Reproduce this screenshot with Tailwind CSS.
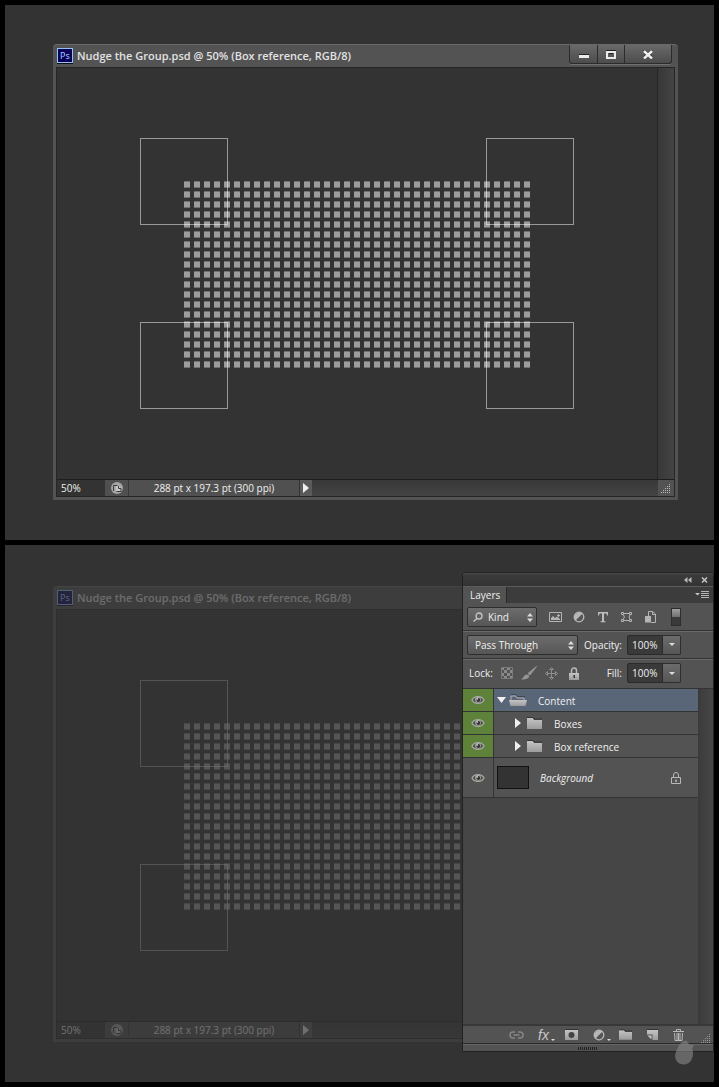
<!DOCTYPE html>
<html lang="en">
<head>
    <meta charset="UTF-8">
    <meta name="viewport" content="width=device-width, initial-scale=1.0">
    <title>Nudge the Group</title>
    <script src="https://cdn.jsdelivr.net/npm/@tailwindcss/browser@4"></script>
</head>
<body class="bg-black p-[5px] flex flex-col gap-[5px] font-['Open_Sans','Noto_Sans',sans-serif] text-[10px] leading-4 text-[#f0f0f0]">

    <!-- shared icons -->
    <svg class="absolute size-0" aria-hidden="true">
        <defs>
            <pattern id="dots" width="10" height="10" patternUnits="userSpaceOnUse" x="44" y="43">
                <rect width="6" height="7" fill="#fff" fill-opacity=".3"/>
                <rect y="1" width="6" height="5" fill="#fff" fill-opacity=".3"/>
            </pattern>
            <pattern id="checker" width="6" height="6" patternUnits="userSpaceOnUse">
                <path d="M0 0h3v3H0zM3 3h3v3H3z" fill="#8a8a8a"/>
            </pattern>
            <linearGradient id="metal" x1="0" y1="0" x2="0" y2="1">
                <stop offset="0" stop-color="#c4c4c4"/>
                <stop offset="1" stop-color="#9c9c9c"/>
            </linearGradient>
            <symbol id="eye" viewBox="0 0 14 10">
                <path d="M1 5C3 .4 11 .4 13 5 11 9.400 3 9.400 1 5z" fill="#4d5548" stroke="#a8aca4" stroke-width="1.300"/>
                <circle cx="7" cy="4.800" r="2.800" fill="#b4b4b4"/>
                <circle cx="7.300" cy="5" r="2" fill="#333"/>
                <circle cx="6.300" cy="4" r=".8" fill="#eee"/>
            </symbol>
            <symbol id="folder" viewBox="0 0 15 12">
                <path d="M0 1h6l1 2h8v9H0z" fill="url(#metal)"/>
                <path d="M0 .5h6l1 1.500h8" fill="none" stroke="#333"/>
            </symbol>
            <symbol id="updown" viewBox="0 0 6 9">
                <path d="M3 0l3 3.500H0zM3 9l3-3.500H0z" fill="#dcdcdc"/>
            </symbol>
            <symbol id="half" viewBox="0 0 12 12">
                <circle cx="6" cy="6" r="4.800" fill="#555" stroke="#b8b8b8" stroke-width="1.300"/>
                <path d="M9.500 2.500A5 5 0 0 0 2.500 9.500z" fill="#b8b8b8"/>
            </symbol>
        </defs>
    </svg>

    <template id="documentWindow">
        <div class="bg-[#535353] rounded-t-[4px] border-t border-[#696969] px-[3px] pb-[3px]">
            <header class="flex h-[22px] items-start">
                <svg class="mt-[3px] ml-px size-4 shrink-0" viewBox="0 0 16 16">
                    <rect x=".5" y=".5" width="15" height="14" fill="#0a0059" stroke="#8fc3f7"/>
                    <path d="M0 15.500h16" stroke="#111"/>
                    <text x="3" y="11" font-size="9" font-family="Noto Sans" fill="#9ccbf5">Ps</text>
                </svg>
                <h2 class="ml-1 mt-[3px] min-w-0 flex-1 truncate text-[11px] font-semibold text-[#e2e2e2]">Nudge the Group.psd @ 50% (Box reference, RGB/8)</h2>
                <div class="mr-[3px] flex h-[19px] rounded-b-[3px] border border-t-0 border-[#2b2b2b] bg-linear-to-b from-[#6a6a6a] to-[#4c4c4c] shadow-[0_1px_0_#707070]">
                    <button aria-label="Minimize" class="flex w-7 items-center justify-center border-r border-[#2b2b2b]">
                        <svg width="10" height="12"><path d="M0 6.500h10" stroke="#222"/><path d="M0 8.500h10" stroke="#eaeaea" stroke-width="3"/></svg>
                    </button>
                    <button aria-label="Maximize" class="flex w-[27px] items-center justify-center border-r border-[#2b2b2b]">
                        <svg width="10" height="9"><path d="M0 .5h10M3 3.500h4" stroke="#222"/><path d="M1 2h8v6H1z" fill="none" stroke="#eaeaea" stroke-width="2"/></svg>
                    </button>
                    <button aria-label="Close" class="flex w-[46px] items-center justify-center">
                        <svg width="10" height="9"><path d="M1 0l8 7M9 0L1 7" stroke="#222" stroke-width="2"/><path d="M1 1l8 7.500M9 1L1 8.500" stroke="#eee" stroke-width="2.400"/></svg>
                    </button>
                </div>
            </header>
            <div class="border border-[#262626]">
                <div class="flex">
                    <div class="flex h-[411px] flex-1 items-center justify-center bg-[#333]">
                        <svg width="434" height="271" fill="none" stroke="#fff" stroke-opacity=".5">
                            <rect x="44" y="43" width="346" height="187" fill="url(#dots)" stroke="none"/>
                            <rect x=".5" y=".5" width="87" height="86"/>
                            <rect x="346.500" y=".5" width="87" height="86"/>
                            <rect x=".5" y="184.500" width="87" height="86"/>
                            <rect x="346.500" y="184.500" width="87" height="86"/>
                        </svg>
                    </div>
                    <div class="w-[17px] border-l border-[#262626] bg-linear-to-r from-[#383838] to-[#444]"></div>
                </div>
                <footer class="flex h-[17px] border-t border-[#1e1e1e] bg-linear-to-b from-[#383838] to-[#444]">
                    <input type="text" aria-label="Zoom" value="50%" class="w-12 bg-[#333] pl-1">
                    <div class="flex w-6 items-center justify-center border-r border-[#3a3a3a] bg-[#505050]">
                        <svg width="12" height="12"><circle cx="6" cy="6" r="6" fill="#a5a5a5"/><path d="M5 9V3.500h2.500L10 6v3z" fill="#c8c8c8"/><path d="M2.500 9V3.500h4M5.500 9.500h4.500V6.500H7.500V4" fill="none" stroke="#3c3c3c"/></svg>
                    </div>
                    <p class="w-[171px] border-r border-[#333] bg-[#505050] text-center">288 pt x 197.3 pt (300 ppi)</p>
                    <button aria-label="Status menu" class="flex w-3 items-center justify-center bg-[#5a5a5a]">
                        <svg width="6" height="10"><path d="M0 0l6 5-6 5z" fill="#f0f0f0"/></svg>
                    </button>
                    <div class="ml-auto flex size-4 items-center justify-center bg-[#535353]">
                        <svg width="10" height="10" stroke="#bbb" stroke-dasharray="1 1"><path d="M0 9.500h10M2 7.500h8M4 5.500h6M6 3.500h4M8 1.500h2"/></svg>
                    </div>
                </footer>
            </div>
        </div>
    </template>

    <section class="bg-[#333] pt-[39px] pr-9 pb-10 pl-12">
        <div data-window></div>
    </section>

    <section class="relative bg-[#333] pt-[41px] pr-9 pb-10 pl-12">
        <div data-window class="opacity-32"></div>

        <aside class="absolute top-[27px] right-0 flex h-[480px] w-[252px] flex-col rounded-t-[3px] border border-[#222] bg-[#535353]">
            <div class="flex h-[13px] items-center justify-end gap-[9px] rounded-t-[3px] border-t border-[#4a4a4a] bg-linear-to-b from-[#3c3c3c] to-[#333] pr-[5px]">
                <button aria-label="Collapse panel"><svg width="8" height="6"><path d="M3.500 0v6L0 3zM7.500 0v6L4 3z" fill="#b8b8b8"/></svg></button>
                <button aria-label="Close panel"><svg width="7" height="6"><path d="M1 .5l5 5M6 .5l-5 5" stroke="#c4c4c4" stroke-width="1.500"/></svg></button>
            </div>
            <div class="flex h-[17px] border-t border-[#5c5c5c] bg-[#3c3c3c]">
                <h2 class="w-11 border-r border-[#2a2a2a] bg-[#535353] pl-[7px]">Layers</h2>
                <button aria-label="Panel menu" class="mr-1 ml-auto flex items-center">
                    <svg width="14" height="8"><path d="M0 2h5L2.500 4.500z" fill="#c4c4c4"/><path d="M6 .5h8M6 2.500h8M6 4.500h8M6 6.500h8" stroke="#b4b4b4"/></svg>
                </button>
            </div>

            <div class="flex h-7 items-center border-b border-[#333] pl-1">
                <div class="relative">
                    <svg class="pointer-events-none absolute top-[5px] left-[6px]" width="10" height="10" fill="none" stroke="#c8c8c8" stroke-width="1.300"><circle cx="6" cy="4" r="3"/><path d="M4 6.500L.5 9.500"/></svg>
                    <select aria-label="Filter type" class="h-5 w-[70px] appearance-none rounded-[2px] border border-[#2e2e2e] bg-linear-to-b from-[#6c6c6c] to-[#565656] pl-5">
                        <option>Kind</option>
                    </select>
                    <svg class="pointer-events-none absolute top-[6px] right-[4px] h-[9px] w-[6px]"><use href="#updown"/></svg>
                </div>
                <div class="ml-3 flex items-center gap-[10px]">
                    <button aria-label="Pixel layers"><svg width="14" height="12"><path d="M.5 1.500h12v9H.5z" fill="none" stroke="#b4b4b4"/><path d="M2 9V7l2-2 2 2 2-1.500L11 8v1z" fill="#b4b4b4"/><path d="M9.500 3v3M8 4.500h3" stroke="#b4b4b4"/></svg></button>
                    <button aria-label="Adjustment layers" class="w-[13px]"><svg class="size-3"><use href="#half"/></svg></button>
                    <button aria-label="Type layers"><svg width="14" height="12"><path d="M2 1h10v3.500h-1L10.500 2.500H8V10l1.500.5v.8h-5v-.8L6 10V2.500H3.500L3 4.500H2z" fill="#bcbcbc"/></svg></button>
                    <button aria-label="Shape layers"><svg width="14" height="12" fill="none" stroke="#b4b4b4"><path d="M4 2.500h5M4 9.500h5M3.500 4c1 1.500 1 2.500 0 4M10 4c-1 1.500-1 2.500 0 4M1.500 1.500h2v2h-2zM9.500 1.500h2v2h-2zM1.500 8.500h2v2h-2zM9.500 8.500h2v2h-2z"/></svg></button>
                    <button aria-label="Smart objects"><svg width="14" height="12"><path d="M4.500 5V.5h4L11.500 3v8.500H7" fill="none" stroke="#b4b4b4"/><path d="M8.500.5V3.500h3" fill="none" stroke="#b4b4b4"/><path d="M1 5h6v6.500H1z" fill="#b4b4b4"/></svg></button>
                </div>
                <button aria-label="Toggle filtering" class="ml-[13px] h-[18px] w-[10px] border border-[#2e2e2e] bg-[#3a3a3a]"><span class="mb-2 block h-2 bg-linear-to-b from-[#a0a0a0] to-[#707070]"></span></button>
            </div>

            <div class="flex h-7 items-center border-t border-b border-t-[#6a6a6a] border-b-[#333] pr-8 pb-px pl-1">
                <div class="relative">
                    <select aria-label="Blend mode" class="h-5 w-[111px] appearance-none rounded-[2px] border border-[#2e2e2e] bg-linear-to-b from-[#6c6c6c] to-[#565656] pl-[7px]">
                        <option>Pass Through</option>
                    </select>
                    <svg class="pointer-events-none absolute top-[6px] right-[4px] h-[9px] w-[6px]"><use href="#updown"/></svg>
                </div>
                <label for="opacity" class="mr-[5px] ml-auto">Opacity:</label>
                <input id="opacity" type="text" value="100%" class="h-5 w-9 rounded-l-[2px] border border-[#2a2a2a] bg-[#3a3a3a] pl-1">
                <button aria-label="Opacity slider" class="flex h-5 w-[18px] items-center justify-center rounded-r-[2px] border border-l-0 border-[#2e2e2e] bg-linear-to-b from-[#6c6c6c] to-[#565656]">
                    <svg width="6" height="3"><path d="M0 0h6L3 3z" fill="#dcdcdc"/></svg>
                </button>
            </div>

            <div class="flex h-[29px] items-center border-t border-[#6a6a6a] pr-8 pb-[2px] pl-[6px]">
                <span>Lock:</span>
                <div class="ml-2 flex items-center gap-[8px]">
                    <button aria-label="Lock transparent pixels"><svg width="12" height="12"><path d="M.5.5h11v11H.5z" fill="url(#checker)" stroke="#7a7a7a"/></svg></button>
                    <button aria-label="Lock image pixels"><svg width="16" height="14"><path d="M15.500.5L9 9 7 7.500z" fill="#949494" stroke="#949494"/><path d="M6 8.500c1.500 0 2.500 1 2 2.500-1 2-4.500 2.500-8 2.500 2.500-1 2.500-4.500 6-5z" fill="#949494"/></svg></button>
                    <button aria-label="Lock position"><svg width="13" height="13" stroke="#8c8c8c"><path d="M6.500 2v9M2 6.500h9"/><path d="M6.500.5l2 2h-4zM6.500 12.500l2-2h-4zM.5 6.500l2-2v4zM12.500 6.500l-2-2v4z" fill="#535353"/></svg></button>
                    <button aria-label="Lock all" class="ml-[3px]"><svg width="10" height="13"><path d="M2.500 6V3.500a2.500 2.500 0 0 1 5 0V6" fill="none" stroke="#b8b8b8" stroke-width="1.500"/><path d="M0 6h10v7H0z" fill="url(#metal)"/><path d="M4.500 8h1.500v3H4.500z" fill="#333"/></svg></button>
                </div>
                <label for="fill" class="mr-[5px] ml-auto">Fill:</label>
                <input id="fill" type="text" value="100%" class="h-5 w-9 rounded-l-[2px] border border-[#2a2a2a] bg-[#3a3a3a] pl-1">
                <button aria-label="Fill slider" class="flex h-5 w-[18px] items-center justify-center rounded-r-[2px] border border-l-0 border-[#2e2e2e] bg-linear-to-b from-[#6c6c6c] to-[#565656]">
                    <svg width="6" height="3"><path d="M0 0h6L3 3z" fill="#dcdcdc"/></svg>
                </button>
            </div>

            <div class="flex flex-1 border-t border-[#333] bg-[#464646]">
                <ul class="flex-1">
                    <li class="flex h-[23px] border-b border-[#333] bg-[#596678]">
                        <button aria-label="Toggle Content" class="flex w-[31px] items-center justify-center border-r border-[#333] bg-[#5f823a]"><svg class="h-[10px] w-[14px]"><use href="#eye"/></svg></button>
                        <div class="flex flex-1 items-center pl-[3px]">
                            <svg width="9" height="6"><path d="M0 0h9L4.500 6z" fill="#f0f0f0"/></svg>
                            <svg class="ml-[3px]" width="18" height="12"><path d="M2 6V2h5l1 2h7v3" fill="#596678" stroke="#b4b4b4"/><path d="M2 .5h5l1 2h8" fill="none" stroke="#3c4656"/><path d="M0 6h18l-1.500 6h-15z" fill="url(#metal)"/></svg>
                            <span class="mt-[2px] ml-[11px]">Content</span>
                        </div>
                    </li>
                    <li class="flex h-[23px] border-b border-[#333] bg-[#535353]">
                        <button aria-label="Toggle Boxes" class="flex w-[31px] items-center justify-center border-r border-[#333] bg-[#5f823a]"><svg class="h-[10px] w-[14px]"><use href="#eye"/></svg></button>
                        <div class="flex flex-1 items-center pl-[21px]">
                            <svg width="6" height="10"><path d="M0 0l6 5-6 5z" fill="#f0f0f0"/></svg>
                            <svg class="ml-[6px] h-3 w-[15px]"><use href="#folder"/></svg>
                            <span class="mt-[2px] ml-3">Boxes</span>
                        </div>
                    </li>
                    <li class="flex h-[23px] border-b border-[#333] bg-[#535353]">
                        <button aria-label="Toggle Box reference" class="flex w-[31px] items-center justify-center border-r border-[#333] bg-[#5f823a]"><svg class="h-[10px] w-[14px]"><use href="#eye"/></svg></button>
                        <div class="flex flex-1 items-center pl-[21px]">
                            <svg width="6" height="10"><path d="M0 0l6 5-6 5z" fill="#f0f0f0"/></svg>
                            <svg class="ml-[6px] h-3 w-[15px]"><use href="#folder"/></svg>
                            <span class="mt-[2px] ml-3">Box reference</span>
                        </div>
                    </li>
                    <li class="flex h-10 border-b border-[#333] bg-[#535353]">
                        <button aria-label="Toggle Background" class="flex w-[31px] items-center justify-center border-r border-[#333]"><svg class="h-[10px] w-[14px]"><use href="#eye"/></svg></button>
                        <div class="flex flex-1 items-center pr-[17px] pl-[3px]">
                            <span class="h-[23px] w-8 border border-[#111] bg-[#333]"></span>
                            <span class="ml-[11px] italic">Background</span>
                            <svg class="ml-auto" width="10" height="12"><path d="M2.500 5.500V3a2.500 2.500 0 0 1 5 0v2.500M.5 5.500h9v6h-9z" fill="none" stroke="#b8b8b8"/><path d="M5 7.500v2.500" stroke="#b8b8b8" stroke-width="1.500"/></svg>
                        </div>
                    </li>
                </ul>
                <div class="w-[15px] border-l border-[#3a3a3a] bg-linear-to-r from-[#3c3c3c] to-[#474747]"></div>
            </div>

            <div class="flex h-5 items-center border-t-2 border-b border-t-[#383838] border-b-[#2a2a2a] pr-[2px] pl-[46px]">
                <div class="flex flex-1 items-center">
                    <button aria-label="Link layers" class="w-7"><svg width="15" height="8" fill="none" stroke="#858585" stroke-width="1.500"><path d="M6 1H4a3 3 0 0 0 0 6h2M9 1h2a3 3 0 0 1 0 6H9M4.500 4h6"/></svg></button>
                    <button aria-label="Layer style" class="flex w-7 items-end pl-px font-['Liberation_Sans',sans-serif] text-[14px] leading-[14px] text-[#c8c8c8] italic">fx<svg class="ml-[2px] mb-px" width="4" height="2"><path d="M0 0h4L2 2z" fill="#ddd"/></svg></button>
                    <button aria-label="Add mask" class="w-7"><svg width="13" height="11"><path d="M0 .5h13" stroke="#333"/><path d="M0 1h13v10H0z" fill="url(#metal)"/><circle cx="6.500" cy="6" r="3" fill="#444"/></svg></button>
                    <button aria-label="New adjustment layer" class="flex w-[26px] items-end"><svg class="size-3"><use href="#half"/></svg><svg class="ml-[2px]" width="4" height="2"><path d="M0 0h4L2 2z" fill="#ddd"/></svg></button>
                    <button aria-label="New group" class="w-7"><svg class="h-[11px] w-[13px]"><use href="#folder"/></svg></button>
                    <button aria-label="New layer" class="w-[26px]"><svg width="11" height="11"><path d="M0 .5h11" stroke="#333"/><path d="M0 1h11v10H5.500V5.500H0z" fill="url(#metal)"/><path d="M.5 6.500h4v4z" fill="#c8c8c8"/></svg></button>
                    <button aria-label="Delete layer" class="w-3"><svg width="11" height="12" fill="none" stroke="#b8b8b8"><path d="M0 2.500h11M3.500 2V.5h4V2M1.500 4l.5 7.500h7L9.500 4M4 4v7M5.500 4v7M7 4v7"/></svg></button>
                </div>
                <svg class="self-end" width="10" height="10" stroke="#999" stroke-dasharray="1 1"><path d="M0 9.500h10M2 7.500h8M4 5.500h6M6 3.500h4M8 1.500h2"/></svg>
            </div>
            <div class="flex h-[7px] items-center justify-center border-t border-[#666]">
                <svg width="20" height="3" stroke="#222" stroke-width="3" stroke-dasharray="1 1"><path d="M0 1.500h20"/></svg>
            </div>
        </aside>

        <!-- pear watermark -->
        <svg class="absolute right-[18px] bottom-[16px]" width="22" height="26" viewBox="0 0 22 26">
            <path d="M9 1.500c2-1.500 5-.5 6 3l5 1-2 3c2 4 1 9-1 12-3 5-11 5-14 1C0 18 1 12 4 8c0-3 2-4 5-6.500z" fill="#888" fill-opacity=".6"/>
        </svg>
    </section>

    <script>
        // both panels show the same document window
        const win = document.getElementById('documentWindow');
        document.querySelectorAll('[data-window]').forEach(slot => {
            slot.appendChild(win.content.cloneNode(true));
        });
    </script>

</body>
</html>
